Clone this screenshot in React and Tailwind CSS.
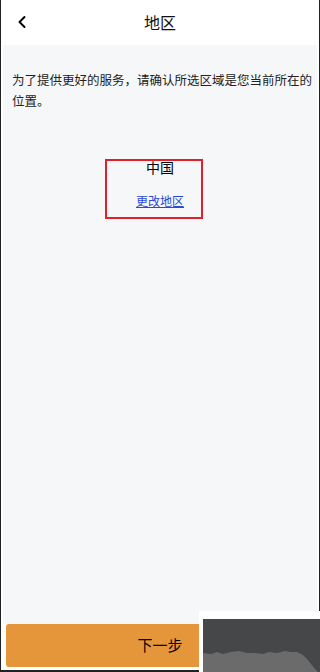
import { ChevronLeft } from "lucide-react";

const App = () => {
  return (
    <div
      className="relative w-[320px] h-[672px] overflow-hidden bg-[#222222] pl-px pr-px pb-[2px]"
      style={{ fontFamily: '"Noto Sans CJK SC", "Liberation Sans", sans-serif' }}
    >
      <div className="flex flex-col h-full bg-white">
        <header className="h-[45px] flex items-center justify-center relative shrink-0">
          <button className="absolute left-[11px] top-[12px] text-black">
            <ChevronLeft className="w-[20px] h-[20px]" strokeWidth={2.4} />
          </button>
          <span className="text-[16px] text-[#111] -mt-[2px]">地区</span>
        </header>

        <main className="flex-1 flex flex-col bg-[#f6f7f9] mx-[2px]">
          <p className="pl-[9px] pr-0 pt-[24px] text-[12.5px] leading-[21px] text-[#222]">
            为了提供更好的服务，请确认所选区域是您当前所在的位置。
          </p>

          <div className="relative flex flex-col items-center mt-[47px]">
            <span className="text-[14px] leading-[18px] text-black">中国</span>
            <a href="#" className="mt-[17px] text-[12px] leading-[16px] text-[#2d47d6] underline">
              更改地区
            </a>
            {/* annotation frame */}
            <div className="absolute left-[102px] top-[1px] w-[98px] h-[60px] border-2 border-[#e0202a]" />
          </div>

          <div className="flex-1" />

          <div className="px-[3px] pb-[3px] bg-white">
            <button className="w-full h-[43px] rounded-[3px] bg-[#e6963a] text-[15px] text-black">
              下一步
            </button>
          </div>
        </main>
      </div>

      <div className="absolute left-[199px] top-[611px] w-[121px] h-[61px] bg-white pl-[4px] pt-[8px]">
        <div className="w-full h-full bg-[#464748] relative">
          <svg className="absolute inset-0 w-full h-full" viewBox="0 0 117 53" preserveAspectRatio="none">
            <path
              d="M0 34 L8 35 L14 33 L20 35 L28 33 L36 32 L44 34 L52 34 L60 35 L66 33 L74 34 L82 32 L88 33 L94 33 L100 36 L104 40 L108 45 L112 50 L115 53 L0 53 Z"
              fill="#6b6b6b"
            />
          </svg>
        </div>
      </div>
    </div>
  );
};

export default App;
